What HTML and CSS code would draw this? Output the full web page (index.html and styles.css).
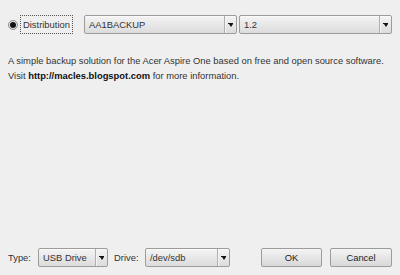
FILE: index.html
```html
<!DOCTYPE html>
<html>
<head>
<meta charset="utf-8">
<link rel="stylesheet" href="styles.css">
</head>
<body>
<div class="dialog">
  <div class="top-row">
    <span class="radio"><span class="dot"></span></span>
    <span class="focus-label">Distribution</span>
    <div class="combo combo-dist">
      <span class="combo-text">AA1BACKUP</span>
      <span class="combo-btn"><span class="arrow"></span></span>
    </div>
    <div class="combo combo-ver">
      <span class="combo-text">1.2</span>
      <span class="combo-btn"><span class="arrow"></span></span>
    </div>
  </div>
  <p class="desc">A simple backup solution for the Acer Aspire One based on free and open source software.<br>Visit <b>http://macles.blogspot.com</b> for more information.</p>
  <div class="spacer"></div>
  <div class="bottom-row">
    <span class="lbl lbl-type">Type:</span>
    <div class="combo combo-type">
      <span class="combo-text">USB Drive</span>
      <span class="combo-btn"><span class="arrow"></span></span>
    </div>
    <span class="lbl lbl-drive">Drive:</span>
    <div class="combo combo-drive">
      <span class="combo-text">/dev/sdb</span>
      <span class="combo-btn"><span class="arrow"></span></span>
    </div>
    <div class="grow"></div>
    <button class="btn btn-ok">OK</button>
    <button class="btn btn-cancel">Cancel</button>
  </div>
</div>
</body>
</html>
```
FILE: styles.css
```css
html, body {
  margin: 0;
  padding: 0;
  background: #efefef;
}
body {
  font-family: "Liberation Sans", Arial, sans-serif;
  font-size: 9.4px;
  color: #333;
}
.dialog {
  box-sizing: border-box;
  width: 400px;
  height: 275px;
  padding: 15px 8px 8px 8px;
  display: flex;
  flex-direction: column;
}
.top-row {
  display: flex;
  align-items: center;
  height: 19px;
}
.radio {
  box-sizing: border-box;
  flex: none;
  width: 10px;
  height: 10px;
  border-radius: 50%;
  border: 1px solid #8a8a8a;
  background: radial-gradient(circle at 50% 40%, #ffffff, #d4d4d4);
  display: flex;
  align-items: center;
  justify-content: center;
}
.dot {
  width: 6px;
  height: 6px;
  border-radius: 50%;
  background: #111;
}
.focus-label {
  box-sizing: border-box;
  flex: none;
  height: 19px;
  border: 1px dotted #555;
  padding: 0 2px;
  margin-left: 2px;
  line-height: 17px;
  width: 53px;
  white-space: nowrap;
  overflow: hidden;
}
.combo {
  box-sizing: border-box;
  flex: none;
  height: 19px;
  border: 1px solid #9c9c9c;
  border-radius: 2px;
  background: linear-gradient(#f4f4f4, #dcdcdc);
  display: flex;
  align-items: stretch;
  box-shadow: inset 0 1px 0 #fafafa;
}
.combo-text {
  flex: 1;
  padding-left: 4px;
  line-height: 17px;
  white-space: nowrap;
  overflow: hidden;
}
.combo-btn {
  width: 11px;
  border-left: 1px solid #b0b0b0;
  box-shadow: inset 1px 0 0 #f4f4f4;
  display: flex;
  align-items: center;
  justify-content: center;
}
.arrow {
  width: 0;
  height: 0;
  border-left: 2.5px solid transparent;
  border-right: 2.5px solid transparent;
  border-top: 3px solid #111;
  position: relative;
  margin-top: 2px;
}
.arrow::before {
  content: "";
  position: absolute;
  left: -2.5px;
  top: -4px;
  width: 5px;
  height: 1px;
  background: #111;
}
.combo-dist {
  width: 153px;
  margin-left: 11px;
}
.combo-ver {
  width: 153px;
  margin-left: 2px;
}
.desc {
  margin: 19px 0 0 0;
  line-height: 15px;
}
.desc b {
  color: #111;
}
.spacer {
  flex: 1;
}
.bottom-row {
  display: flex;
  align-items: center;
  height: 19px;
}
.lbl {
  flex: none;
}
.lbl-type {
  width: 30px;
}
.combo-type {
  width: 70px;
}
.lbl-drive {
  margin-left: 6px;
  width: 31px;
}
.combo-drive {
  width: 85px;
}
.grow {
  flex: 1;
}
.btn {
  box-sizing: border-box;
  flex: none;
  height: 19px;
  border: 1px solid #9c9c9c;
  border-radius: 2px;
  background: linear-gradient(#f4f4f4, #d8d8d8);
  font-family: "Liberation Sans", Arial, sans-serif;
  font-size: 9.4px;
  color: #222;
  padding: 0;
}
.btn-ok {
  width: 61px;
}
.btn-cancel {
  width: 62px;
  margin-left: 8px;
}
```
